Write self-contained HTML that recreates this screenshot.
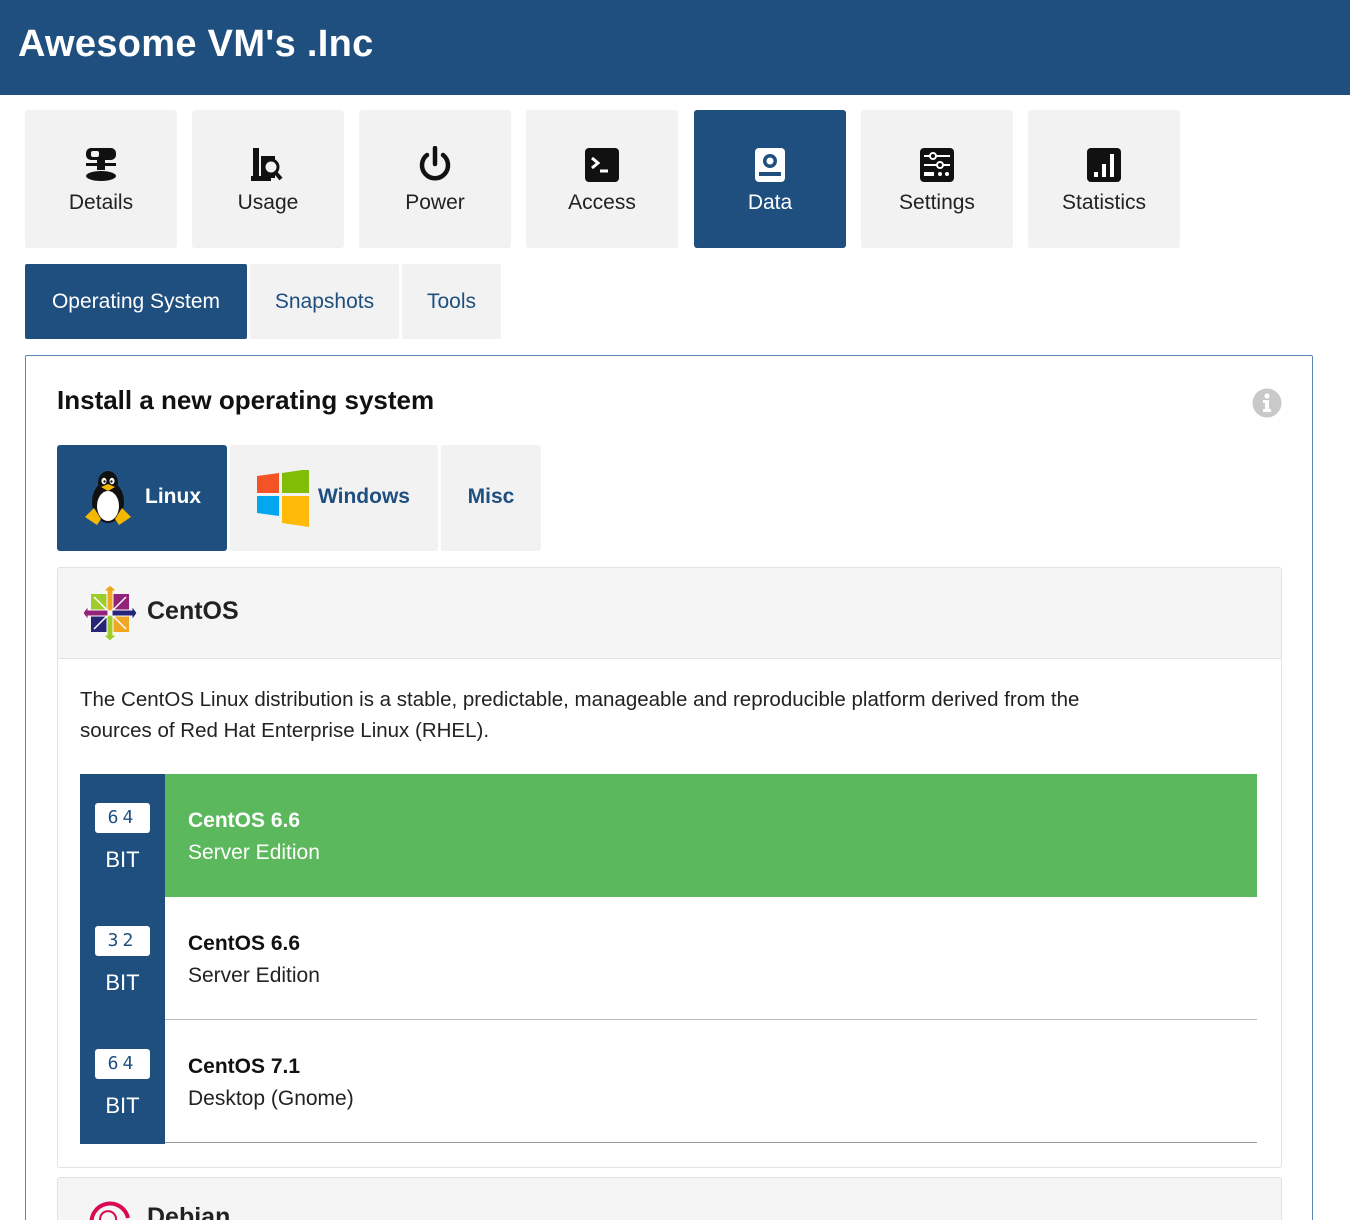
<!DOCTYPE html>
<html><head><meta charset="utf-8">
<style>
*{box-sizing:border-box;margin:0;padding:0}
html,body{width:1350px;height:1220px;overflow:hidden}
body{background:#fff;font-family:"Liberation Sans","DejaVu Sans",sans-serif;position:relative;color:#222}
.a{position:absolute}
.hdr{left:0;top:0;width:1350px;height:95px;background:#1f4f7f}
.hdr h1{position:absolute;left:18px;top:23px;color:#fff;font-size:38px;font-weight:bold;letter-spacing:0.3px}
.tile{top:110px;width:152px;height:138px;background:#f2f2f2;border-radius:3px;text-align:center}
.tile svg{position:absolute;left:57px;top:36px}
.tile span{position:absolute;left:0;right:0;top:81px;font-size:21px;color:#222}
.tile.on{background:#1f4f7f}.tile.on span{color:#fff}
.st{top:264px;height:75px;background:#f2f2f2;border-radius:2px;font-size:21px;color:#1f4f7f;line-height:76px;text-align:center}
.st.on{background:#1f4f7f;color:#fff}
.panel{left:25px;top:355px;width:1288px;height:900px;border:1.5px solid #5b86b6;border-radius:2px}
.ot{top:445px;height:106px;background:#f2f2f2;border-radius:3px;font-size:21px;font-weight:bold;color:#1f4f7f}
.ot.on{background:#1f4f7f;color:#fff}
.box{left:57px;width:1225px;border:1px solid #e2e2e2;border-radius:3px}
.row{left:165px;width:1092px;height:123px}
.row b{position:absolute;left:23px;top:35px;font-size:21px;color:#111}
.row i{position:absolute;left:23px;top:67px;font-size:21px;font-style:normal;color:#222}
.bit{left:80px;width:85px;height:123px}
.bit .n{position:absolute;left:15px;top:29px;width:55px;height:30px;background:#fff;border-radius:3px;color:#1f4f7f;font-family:"DejaVu Sans Mono",monospace;font-size:18px;text-align:center;line-height:30px;letter-spacing:4px}
.bit .t{position:absolute;left:0;right:0;top:73px;color:#fff;font-size:22px;text-align:center}
</style></head><body>
<div class="a hdr"><h1>Awesome VM's .Inc</h1></div>

<div class="a tile" style="left:25px"><svg width="38" height="38" viewBox="0 0 38 38"><rect x="4" y="2" width="30" height="12" rx="5" fill="#111"/><rect x="9" y="5" width="8" height="6" rx="2" fill="#f2f2f2"/><rect x="4" y="17" width="30" height="3" fill="#111"/><rect x="15" y="14" width="8" height="10" fill="#111"/><ellipse cx="19" cy="30" rx="15" ry="5" fill="#111"/></svg><span>Details</span></div>
<div class="a tile" style="left:192px"><svg width="38" height="38" viewBox="0 0 38 38"><rect x="4" y="2" width="6" height="32" fill="#111"/><rect x="2" y="30" width="20" height="5" fill="#111"/><rect x="12" y="10" width="14" height="22" fill="#111"/><circle cx="22" cy="21" r="7" fill="#f2f2f2" stroke="#111" stroke-width="3"/><path d="M26 26l6 7" stroke="#111" stroke-width="4"/></svg><span>Usage</span></div>
<div class="a tile" style="left:359px"><svg width="38" height="38" viewBox="0 0 38 38"><path d="M11 9A13 13 0 1 0 27 9" fill="none" stroke="#111" stroke-width="4.5" stroke-linecap="round"/><path d="M19 2v16" stroke="#111" stroke-width="4.5" stroke-linecap="round"/></svg><span>Power</span></div>
<div class="a tile" style="left:526px"><svg width="38" height="38" viewBox="0 0 38 38"><rect x="2" y="2" width="34" height="34" rx="4" fill="#111"/><path d="M9 12l6 5-6 5" fill="none" stroke="#fff" stroke-width="3"/><path d="M17 25h8" stroke="#fff" stroke-width="3"/></svg><span>Access</span></div>
<div class="a tile on" style="left:694px"><svg width="38" height="38" viewBox="0 0 38 38"><rect x="4" y="2" width="30" height="34" rx="4" fill="#fff"/><circle cx="19" cy="15" r="7" fill="#1f4f7f"/><path d="M8 26h22v4H8z" fill="#1f4f7f"/><circle cx="19" cy="15" r="3.5" fill="#fff"/></svg><span>Data</span></div>
<div class="a tile" style="left:861px"><svg width="38" height="38" viewBox="0 0 38 38"><rect x="2" y="2" width="34" height="34" rx="4" fill="#111"/><path d="M6 10h26M6 19h26" stroke="#fff" stroke-width="2"/><circle cx="15" cy="10" r="3" fill="#111" stroke="#fff" stroke-width="2"/><circle cx="22" cy="19" r="3" fill="#111" stroke="#fff" stroke-width="2"/><rect x="6" y="26" width="10" height="4" fill="#fff"/><circle cx="22" cy="28" r="2" fill="#fff"/><circle cx="29" cy="28" r="2" fill="#fff"/></svg><span>Settings</span></div>
<div class="a tile" style="left:1028px"><svg width="38" height="38" viewBox="0 0 38 38"><rect x="2" y="2" width="34" height="34" rx="4" fill="#111"/><rect x="9" y="26" width="4" height="5" fill="#fff"/><rect x="17" y="18" width="4" height="13" fill="#fff"/><rect x="25" y="8" width="4" height="23" fill="#fff"/></svg><span>Statistics</span></div>

<div class="a st on" style="left:25px;width:222px">Operating System</div>
<div class="a st" style="left:250px;width:149px">Snapshots</div>
<div class="a st" style="left:402px;width:99px">Tools</div>

<div class="a panel"></div>
<div class="a" style="left:57px;top:385px;font-size:26px;font-weight:bold;color:#111">Install a new operating system</div>
<svg class="a" style="left:1252px;top:388px" width="30" height="30" viewBox="0 0 30 30"><circle cx="15" cy="15" r="14.5" fill="#c9c9c9"/><circle cx="15" cy="8" r="2.6" fill="#fff"/><path d="M11 12h6v9h2v3h-8v-3h2v-6h-2z" fill="#fff"/></svg>

<div class="a ot on" style="left:57px;width:170px">
<svg class="a" style="left:26px;top:25px" width="50" height="56" viewBox="0 0 50 56"><ellipse cx="25" cy="32" rx="16" ry="21" fill="#111"/><ellipse cx="25" cy="13" rx="10" ry="12" fill="#111"/><ellipse cx="25" cy="36" rx="11" ry="15" fill="#fff"/><ellipse cx="21" cy="11" rx="2.5" ry="3.2" fill="#fff"/><ellipse cx="29" cy="11" rx="2.5" ry="3.2" fill="#fff"/><circle cx="21.5" cy="11.5" r="1.2" fill="#111"/><circle cx="28.5" cy="11.5" r="1.2" fill="#111"/><path d="M18 17l7-3 7 3-7 4z" fill="#f5b800"/><path d="M2 47l9-9 7 11-4 6z" fill="#f5b800"/><path d="M48 47l-9-9-7 11 4 6z" fill="#f5b800"/></svg>
<span class="a" style="left:88px;top:40px">Linux</span></div>
<div class="a ot" style="left:230px;width:208px">
<svg class="a" style="left:27px;top:25px" width="52" height="57" viewBox="0 0 52 57"><path d="M0 6l22-3v20H0z" fill="#f35325"/><path d="M25 3l27-4v24H25z" fill="#81bc06"/><path d="M0 26h22v20L0 43z" fill="#05a6f0"/><path d="M25 26h27v31l-27-4z" fill="#ffba08"/></svg>
<span class="a" style="left:88px;top:40px">Windows</span></div>
<div class="a ot" style="left:441px;width:100px;text-align:center;line-height:104px">Misc</div>

<div class="a box" style="top:567px;height:601px"></div>
<div class="a" style="left:58px;top:568px;width:1223px;height:91px;background:#f5f5f5;border-bottom:1px solid #e2e2e2"></div>
<svg class="a" style="left:83px;top:585px" width="54" height="56" viewBox="-27 -28 54 56"><rect x="-19" y="-19" width="17" height="17" fill="#9ccd2a"/><rect x="2" y="-19" width="17" height="17" fill="#932279"/><rect x="-19" y="2" width="17" height="17" fill="#262577"/><rect x="2" y="2" width="17" height="17" fill="#efa724"/><g stroke="#fff" stroke-width="1.5" fill="none"><path d="M-16-16L-3-3M16-16L3-3M-16 16L-3 3M16 16L3 3"/></g><path d="M-3-2v-20h-4l7-6 7 6h-4v20z" fill="#efa724" stroke="#fff" stroke-width="1"/><path d="M-3 2v20h-4l7 6 7-6h-4V2z" fill="#9ccd2a" stroke="#fff" stroke-width="1"/><path d="M-2-3h-20v-4l-5 7 5 7v-4h20z" fill="#932279" stroke="#fff" stroke-width="1"/><path d="M2-3h20v-4l5 7-5 7v-4H2z" fill="#262577" stroke="#fff" stroke-width="1"/></svg>
<div class="a" style="left:147px;top:597px;font-size:25px;font-weight:bold;color:#222">CentOS</div>
<div class="a" style="left:80px;top:684px;width:1030px;font-size:20.5px;line-height:31px;color:#222">The CentOS Linux distribution is a stable, predictable, manageable and reproducible platform derived from the sources of Red Hat Enterprise Linux (RHEL).</div>

<div class="a" style="left:80px;top:774px;width:85px;height:370px;background:#1f4f7f"></div>
<div class="a bit" style="top:774px"><div class="n">64</div><div class="t">BIT</div></div>
<div class="a bit" style="top:897px"><div class="n">32</div><div class="t">BIT</div></div>
<div class="a bit" style="top:1020px"><div class="n">64</div><div class="t">BIT</div></div>
<div class="a row" style="top:774px;background:#5cb85c"><b style="color:#fff">CentOS 6.6</b><i style="color:#fff">Server Edition</i></div>
<div class="a row" style="top:897px;border-bottom:1.5px solid #bbb"><b>CentOS 6.6</b><i>Server Edition</i></div>
<div class="a row" style="top:1020px;border-bottom:1.5px solid #999"><b>CentOS 7.1</b><i>Desktop (Gnome)</i></div>

<div class="a box" style="top:1177px;height:80px;background:#f5f5f5"></div>
<svg class="a" style="left:86px;top:1192px" width="48" height="40" viewBox="0 0 48 40"><path d="M6 34A18 18 0 1 1 42 26" fill="none" stroke="#d70a53" stroke-width="4"/><path d="M18 34a8 8 0 1 1 12-6" fill="none" stroke="#d70a53" stroke-width="2"/></svg>
<div class="a" style="left:147px;top:1203px;font-size:25px;font-weight:bold;color:#222">Debian</div>
</body></html>
